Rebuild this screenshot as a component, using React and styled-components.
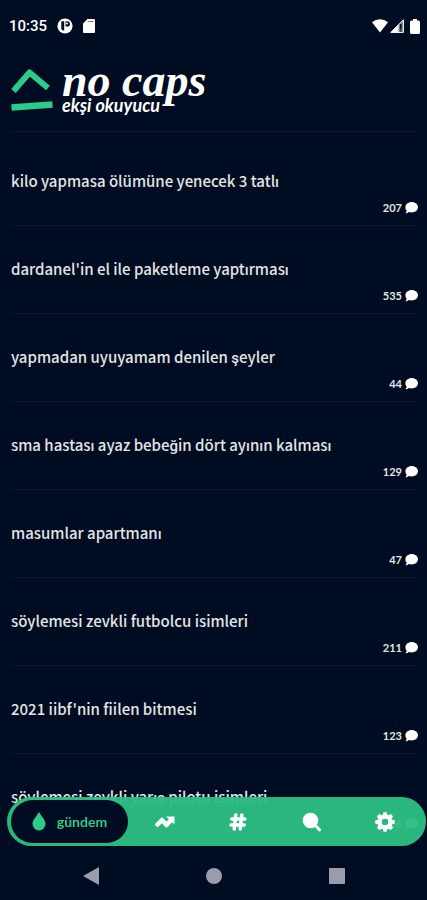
import React from "react";
import styled, { createGlobalStyle } from "styled-components";

const navy = "#000c21";
const green = "#2bcb8b";

const GlobalStyle = createGlobalStyle`
  * { box-sizing: border-box; }
  body {
    margin: 0;
    background: ${navy};
    color: #e4e4e4;
    font-family: "Noto Sans CJK SC", Roboto, sans-serif;
  }
`;

const Page = styled.div`
  min-height: 100vh;
  display: flex;
  flex-direction: column;
  padding-bottom: 54px;
`;

const StatusBar = styled.div`
  height: 52px;
  display: flex;
  align-items: center;
  gap: 10px;
  padding: 0 7px 0 9px;
  color: #fff;
  font: 500 15px/20px Roboto, sans-serif;
`;

const Signals = styled.div`
  margin-left: auto;
  display: flex;
  align-items: center;
  gap: 2px;
`;

const Battery = styled.svg`
  margin-left: 4px;
`;

const Header = styled.header`
  display: flex;
  align-items: flex-start;
  gap: 8px;
  height: 80px;
  margin: 0 10px 6px;
  padding-top: 15px;
  border-bottom: 1px solid #071a2b;
`;

const Brand = styled.h1`
  margin: 0;
  display: flex;
  flex-direction: column;
  color: #fff;
  font: italic 700 46px/28px "Liberation Serif", serif;
  white-space: nowrap;
`;

const Tagline = styled.span`
  font: italic 700 18px/20px Lato, sans-serif;
`;

const List = styled.ul`
  list-style: none;
  margin: 0;
  padding: 0 10px;
`;

const Row = styled.li`
  height: 88px;
  display: flex;
  flex-direction: column;
  border-bottom: 1px solid #071a2b;
`;

const Topic = styled.a`
  padding: 31px 0 0 1px;
  color: inherit;
  text-decoration: none;
  font-size: 15px;
  font-weight: 500;
  line-height: 24px;
`;

const Count = styled.span`
  display: flex;
  align-items: center;
  align-self: flex-end;
  gap: 3px;
  padding-top: 6px;
  margin-right: -1px;
  font: 700 11px/18px Lato, sans-serif;
`;

const TabBar = styled.nav`
  position: fixed;
  left: 7px;
  right: 1px;
  bottom: 54px;
  height: 49px;
  display: flex;
  padding: 3px 4px;
  border-radius: 25px;
  background: rgba(43, 190, 130, 0.96);
`;

const Tab = styled.button`
  flex: ${(p) => (p.$active ? "0 0 117px" : "1")};
  display: flex;
  align-items: center;
  justify-content: center;
  gap: 11px;
  padding: 0;
  border: 0;
  border-radius: 22px;
  background: ${(p) => (p.$active ? navy : "transparent")};
  color: ${(p) => (p.$active ? green : "#fff")};
  font: 700 14px/20px Lato, sans-serif;
`;

const SystemBar = styled.div`
  position: fixed;
  left: 0;
  right: 0;
  bottom: 0;
  height: 54px;
  display: flex;
  align-items: center;
  justify-content: center;
  gap: 99px;
  padding-top: 6px;
  background: ${navy};
`;

const SystemButton = styled.button`
  width: 24px;
  height: 24px;
  display: grid;
  place-items: center;
  padding: 0;
  border: 0;
  background: none;
  color: #9a9cac;
`;

const topics = [
  ["kilo yapmasa ölümüne yenecek 3 tatlı", 207],
  ["dardanel'in el ile paketleme yaptırması", 535],
  ["yapmadan uyuyamam denilen şeyler", 44],
  ["sma hastası ayaz bebeğin dört ayının kalması", 129],
  ["masumlar apartmanı", 47],
  ["söylemesi zevkli futbolcu isimleri", 211],
  ["2021 iibf'nin fiilen bitmesi", 123],
  ["söylemesi zevkli yarış pilotu isimleri", 86],
];

const Bubble = () => (
  <svg width="13" height="12" viewBox="0 0 13 12" fill="#fff" aria-hidden="true">
    <path d="M6.7 0C10.2 0 13 2.3 13 5.2s-2.8 5.200-6.300 5.200c-1 0-1.900-.2-2.700-.5C3 10.700 1.800 11.300.4 11.300c.7-.8 1.200-1.700 1.300-2.500C.9 7.800.4 6.600.4 5.200.4 2.300 3.200 0 6.700 0z" />
  </svg>
);

const tabs = [
  {
    label: "son",
    icon: (
      <svg width="20" height="14" viewBox="0 0 20 14" aria-hidden="true">
        <path d="M2.500 9.500 7 5l4.500 5L16 5" fill="none" stroke="currentColor" strokeWidth="4.500" strokeLinejoin="round" strokeLinecap="round" />
        <path d="M11 1.500h8.500V9.500z" fill="currentColor" />
      </svg>
    ),
  },
  {
    label: "kanallar",
    icon: (
      <svg width="18" height="18" viewBox="0 0 18 18" fill="none" stroke="currentColor" strokeWidth="3.500" strokeLinecap="round" aria-hidden="true">
        <path d="M6.800 2 5.200 16M12.800 2l-1.600 14M2.700 6h13.200M2 12h13.200" />
      </svg>
    ),
  },
  {
    label: "ara",
    icon: (
      <svg width="20" height="20" viewBox="0 0 20 20" aria-hidden="true">
        <circle cx="8.500" cy="8.500" r="7.800" fill="currentColor" />
        <path d="m12.500 12.500 5 5.300" stroke="currentColor" strokeWidth="3" strokeLinecap="round" />
      </svg>
    ),
  },
  {
    label: "ayarlar",
    icon: (
      <svg width="20" height="20" viewBox="-10 -10 20 20" aria-hidden="true">
        <circle r="5.200" fill="none" stroke="currentColor" strokeWidth="4" />
        <g fill="currentColor">
          {[0, 45, 90, 135, 180, 225, 270, 315].map((a) => (
            <path key={a} d="M-2.800-6 -1.500-9.800h3L2.800-6z" transform={`rotate(${a})`} />
          ))}
        </g>
      </svg>
    ),
  },
];

export default function App() {
  return (
    <Page>
      <GlobalStyle />
      <StatusBar>
        <span>10:35</span>
        <svg width="16" height="16" viewBox="0 0 16 16" aria-hidden="true">
          <circle cx="8" cy="8" r="7.600" fill="#fff" />
          <path d="M4.300 3.200h2.900v9.600a5.500 5.500 0 0 1-2.900-1.500zM8.600 3.200h1.600a2.700 2.700 0 0 1 0 5.400H8.600z" fill={navy} />
          <circle cx="10" cy="5.600" r="1" fill="#fff" />
        </svg>
        <svg width="12" height="14" viewBox="0 0 12 14" aria-hidden="true">
          <path d="M4.500 0H11a1 1 0 0 1 1 1v12a1 1 0 0 1-1 1H1a1 1 0 0 1-1-1V4.500z" fill="#fff" />
          <path d="M4.500 2.500h5.800" stroke="#777d88" />
        </svg>
        <Signals>
          <svg width="16" height="14" viewBox="0 0 16 14" fill="#fff" aria-hidden="true">
            <path d="M0 3.200a12.500 12.500 0 0 1 16 0L8 13.500z" />
          </svg>
          <svg width="14" height="14" viewBox="0 0 14 14" aria-hidden="true">
            <path d="M.8 13.400 13.400.8v12.600z" fill="#777d88" stroke="#fff" />
            <path d="M.8 13.400 8.500 5.700v7.700z" fill="#fff" />
            <path d="M10.800 5v5.200M10.800 11.300v1.200" stroke={navy} strokeWidth="1.500" />
          </svg>
          <Battery width="10" height="15" viewBox="0 0 10 15" fill="#fff" aria-hidden="true">
            <path d="M3 0h4v1.500h1.500A1.500 1.500 0 0 1 10 3v10.500A1.500 1.500 0 0 1 8.500 15h-7A1.500 1.500 0 0 1 0 13.500V3a1.500 1.500 0 0 1 1.500-1.500H3z" />
          </Battery>
        </Signals>
      </StatusBar>

      <Header>
        <svg width="44" height="46" viewBox="0 0 44 46" fill="none" stroke={green} strokeWidth="6" strokeLinejoin="round" aria-hidden="true">
          <path d="M3.500 24 19.500 5.500 38 21" />
          <path d="m1.500 40.500 41-3" strokeWidth="6.500" />
        </svg>
        <Brand>
          no caps
          <Tagline>ekşi okuyucu</Tagline>
        </Brand>
      </Header>

      <List>
        {topics.map(([title, count]) => (
          <Row key={title}>
            <Topic href="#">{title}</Topic>
            <Count>
              {count}
              <Bubble />
            </Count>
          </Row>
        ))}
      </List>

      <TabBar>
        <Tab $active aria-current="page">
          <svg width="14" height="19" viewBox="0 0 14 19" fill="currentColor" aria-hidden="true">
            <path d="M7 0c2.500 4.300 6.500 8 6.500 12A6.500 6.500 0 0 1 7 18.500 6.500 6.500 0 0 1 .5 12C.5 8 4.500 4.300 7 0z" />
          </svg>
          gündem
        </Tab>
        {tabs.map((t) => (
          <Tab key={t.label} aria-label={t.label}>
            {t.icon}
          </Tab>
        ))}
      </TabBar>

      <SystemBar>
        <SystemButton aria-label="geri">
          <svg width="16" height="18" viewBox="0 0 16 18" fill="currentColor">
            <path d="M16 0v18L0 9z" />
          </svg>
        </SystemButton>
        <SystemButton aria-label="ana ekran">
          <svg width="16" height="16" viewBox="0 0 16 16" fill="currentColor">
            <circle cx="8" cy="8" r="8" />
          </svg>
        </SystemButton>
        <SystemButton aria-label="son uygulamalar">
          <svg width="16" height="16" viewBox="0 0 16 16" fill="currentColor">
            <rect width="16" height="16" rx="1" />
          </svg>
        </SystemButton>
      </SystemBar>
    </Page>
  );
}
